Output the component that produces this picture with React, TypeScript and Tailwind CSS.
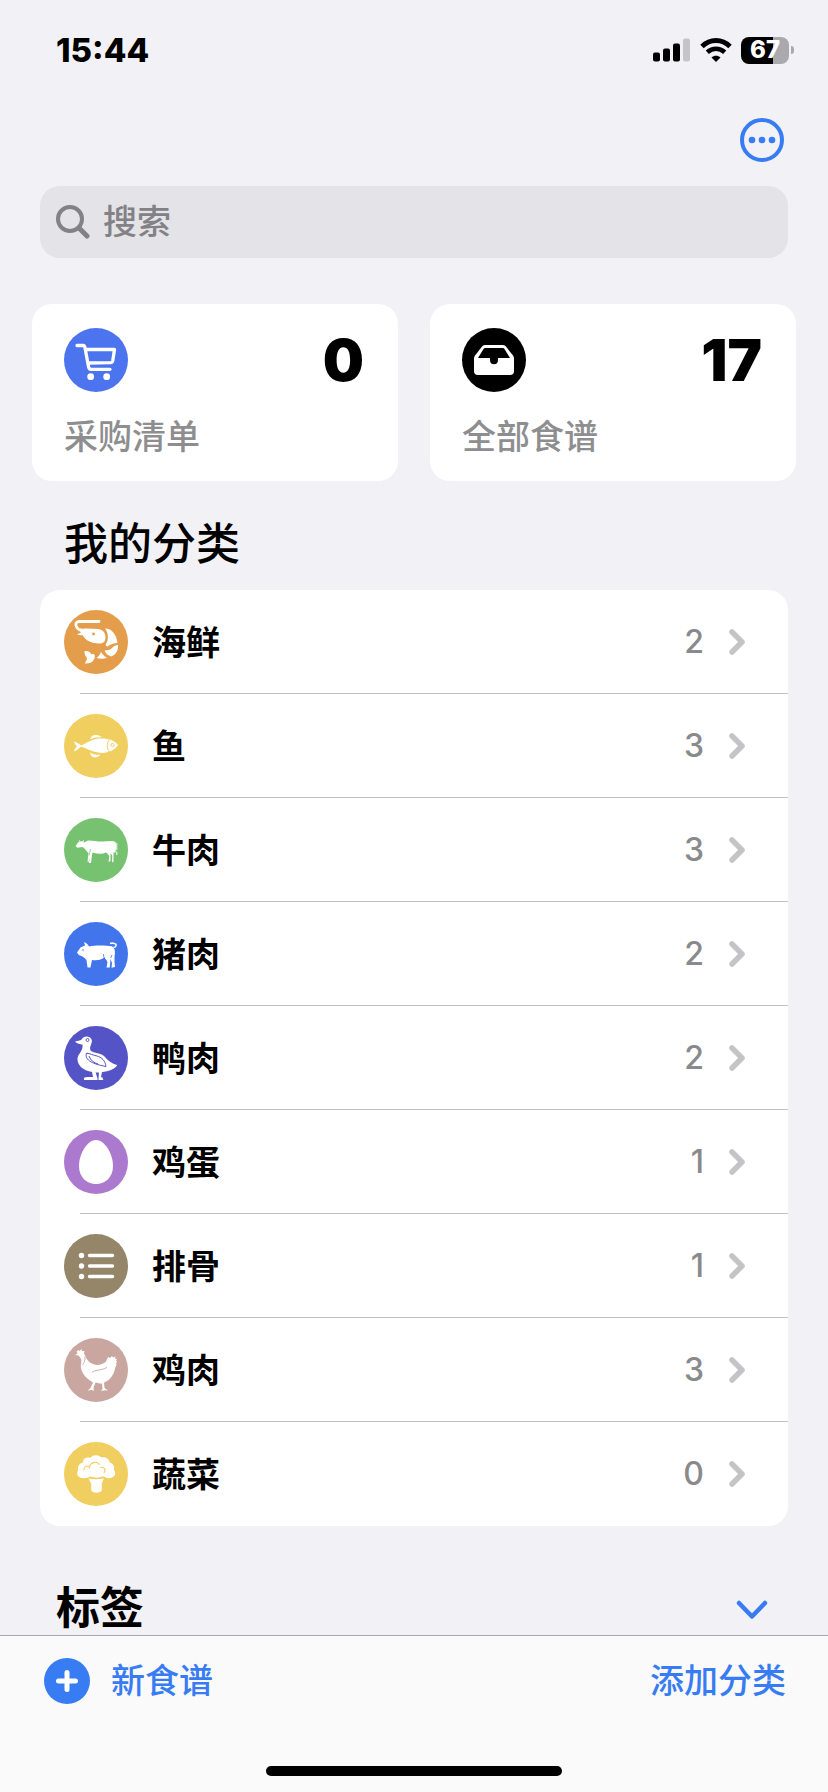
import type { ReactNode } from "react";

/* Glyphs share a 64 x 64 canvas and are drawn in white on the badge colour. */

const ShrimpGlyph = (
  <>
    <path d="M35 11.500H15.500C12.500 11.500 11.500 13 12 15.500C12.500 17.500 14 19.500 17 20" fill="none" stroke="#fff" strokeWidth="2.800" strokeLinecap="round" />
    <path d="M14 19.500C20 18 28 18.500 34 19C39 19.500 41.500 23 41.500 27C41.500 30.500 40 33 37 33.500C32 34 27 32.500 23.500 30.500C20.500 28.500 19.500 26.500 18.500 25C16.500 25.500 14.500 25 13 24.200C15 23.500 16.500 23 17 22C15.500 21.500 14.500 20.500 14 19.500Z" />
    <circle className="fill-current" cx="29.500" cy="24" r="1.400" />
    <path d="M41 18.500C47 18 52.500 24 53.500 33C49.500 33 46.500 34.500 43.500 36.500C41.500 36 41 35 42.500 33C45 29 44 22 41 18.500Z" />
    <path d="M54 35C54.500 40 52 45 47 46.500C44 45.500 41.500 43.500 40.500 40.500C44 40.500 47.500 39.500 49 37C50.500 35.800 52 35.200 54 35Z" />
    <path d="M37 42C38.500 44.500 40.500 46.500 43 47.800C40 49 36 49 32.500 48C34.500 46.500 36 44.500 37 42Z" />
    <path d="M20.500 41C24 40.500 26.500 42 27.500 44.500C29 43.500 30.500 44 30.800 46C31 50 27.500 54 21 53.500C21.500 51.500 23 50 23 48C21.500 46 20.200 44 20.500 41Z" />
  </>
);

const FishGlyph = (
  <>
    <path d="M10 27.500C13 28 15 30 17 31.500C22 29.500 27 25 36 24.500C44 24 51 26.500 54 31C51 36 44 39.500 36 38.800C28 38 22 34 17 32.800C15 34 13 36.500 10 37.500C10.500 35.500 11.500 34 13 32.300C11.500 31 10.500 29.500 10 27.500Z" />
    <path d="M26 25.500C27 23 28.500 21 31 21C34 21 36 21.500 38 23.300C34 22.800 30 23.600 26 25.500Z" />
    <path d="M26 38.500C28 40 32 41 36.500 40.800C34.500 43 32 44 29 43C27 42.500 26.500 40.500 26 38.500Z" />
    <path d="M45.500 25.500C42.500 29 42.500 34.500 45.500 38" fill="none" stroke="currentColor" strokeWidth="1" />
    <circle cx="48.500" cy="31" r="1.600" fill="none" stroke="currentColor" strokeWidth="1" />
  </>
);

const CowGlyph = (
  <>
    <path d="M14.500 24L15.500 24L15 21.500L16.500 23.500H18L20 22L19.500 24.500C21 25 22 23 24 22.500C30 22.500 34 23.800 39 23.500C44 23.200 49 22.500 51.500 24C52.500 28 52 31 51.500 34.500H49.500V43.500L48 44.500L48.300 38L47 35.500L46.500 36V43L44.500 44L45.300 38C44 36 43 35 42 34.500C38 36.500 33 36 28.500 34.500L28 37L27 45L24.800 45L26 39L24.500 44L23.500 43.500L24.500 35C22 33 20.500 29.500 18 29L13.500 29.800L11.500 28L14.500 24Z" />
    <path d="M52.800 25V37" fill="none" stroke="#fff" strokeWidth="1" strokeDasharray="7 1.500" />
    <path d="M25 37.500L26.500 31" fill="none" stroke="currentColor" strokeWidth=".7" />
  </>
);

const PigGlyph = (
  <>
    <path d="M20 20C22 20.500 24 22.500 25 24.500C32 23 42 23.500 48 24.300C51 26 51.500 30 50.500 34.500L50.500 40L51 45L47.500 45.800L48 41L46.500 37L45.800 45.500L42.500 45.500L43.500 40L40.500 35.500C36 38.500 32 38.500 28 38L26.500 45.500H23.500L22.500 38C20.500 35.500 17.500 33.500 14.800 33L13 30.500L16.500 25.500L21 23.500Z" />
    <path d="M49.500 25.500C52.500 25.500 53 22 50.500 21.500C49 21 47.500 21 46 21.500" fill="none" stroke="#fff" strokeWidth="1.500" />
    <circle className="fill-current" cx="19" cy="28" r=".8" />
    <path d="M39.500 32C39.500 35 40.500 37.500 42.500 39M46.800 36L48 33" fill="none" stroke="currentColor" strokeWidth=".8" />
  </>
);

const DuckGlyph = (
  <>
    <path d="M11 15.500C14 14.800 17.500 14.500 18.300 12.500C20 9.500 26.500 9.500 27.800 14C28.500 17.500 25 20.500 26.500 24.500C30 27.500 37 26.500 40.500 30.500C43.500 34 48 38 53.300 39C50 44.500 41 46.500 32 46.500C22 46 14 41 13.500 34C13 28 19.500 25.500 18.500 18.500C16 18 13 18 11 15.500Z" />
    <path d="M28 46L29 51C26 51 21 50.500 20 52V54H33.500V52.500L31.500 46ZM35 46L34.500 52V54H39.300L38.500 51.500L37 51L38 46Z" />
    <circle cx="23.500" cy="14" r="1.500" fill="none" stroke="currentColor" strokeWidth=".9" />
    <path d="M22.500 27C20.500 33 26 37.500 42 40.500C41 34.500 38 31.500 33 30C29 29 26 27.800 22.500 27ZM25 30C26.500 34.500 30 37 34 38" fill="none" stroke="currentColor" strokeWidth="1" />
  </>
);

const EggGlyph = <path d="M32 10C40.500 10 49 23.500 49 36C49 47 41.500 54 32 54C22.500 54 15 47 15 36C15 23.500 23.500 10 32 10Z" />;

const ListGlyph = (
  <>
    <circle cx="17.500" cy="21.500" r="2.700" />
    <circle cx="17.500" cy="32" r="2.700" />
    <circle cx="17.500" cy="42.500" r="2.700" />
    <path d="M25.500 21.500H48.500M25.500 32H48.500M25.500 42.500H48.500" stroke="#fff" strokeWidth="3.400" strokeLinecap="round" />
  </>
);

const ChickenGlyph = (
  <>
    <path d="M12.500 13.500L14.500 12L15.500 13L17.500 11L18 13L20.500 13L20 15.500C22 19.500 24 24.500 29 26C33.500 28 38.500 26.500 42 23.500C43 21.500 43 20.500 44.500 19L46 20L48 18L49 19.500L51.500 18.500L51 20.500L53 21L52 22.500L53.300 24L52 25L52.500 27C50.500 29.500 51.500 33 48 38C45.500 42 42 44 40 44.500L40.500 50L44 52.500L41.500 52.300L37 53L38.500 51L38 45.500C35 45.500 33.500 45 31.500 44.500L29.500 49.500L29.800 53L27.500 51.800L23.500 52.800L26.500 50L29 44.500C23 41 18 36 17 30C16.300 26.500 18.500 22 16.500 20L14.500 17.500L11 17L13.500 15.500Z" />
    <path d="M28 34.500C31 31.500 36 33 43 29.500M21 18.500C21.500 22 20 25 18.500 27" fill="none" stroke="currentColor" strokeWidth=".9" />
  </>
);

const BroccoliGlyph = (
  <>
    <path d="M18 36C13.500 35.500 12 31.500 14 28.500C13.200 24 16 21 19 20.500C18.500 16.500 23.500 14.500 26.500 15.800C28.500 12.500 35 12.500 37 15.500C41 14.500 45.500 16.500 45.500 20.500C49 21 51 24.500 50 28C52.500 31.500 51 35 46.500 36C42.500 36.800 41 34.500 39 34.500C35 36 30 36 26 34.500C23.500 36 21 36.500 18 36Z" />
    <path d="M24.500 36.500C29 37.500 35 37.500 39.800 36.500L37.800 41.500V48C37.500 51.500 27.500 51.500 27.300 48V42Z" />
    <path d="M19.800 28.500C20 24.500 22 23.500 25 24.500M25.500 26.500C25 20.500 33 18 35.500 23M36 25.500C40 24.500 42.500 27.500 40 31" fill="none" stroke="currentColor" strokeWidth="1.100" />
  </>
);

const CartGlyph = (
  <>
    <path d="M13 17.500H19.500C20.300 17.500 20.600 18 20.800 18.800L24.500 38.500C24.800 40.500 25.500 41.300 27 41.300H46M21.500 21.500H50.500L48.800 32.500C48.500 34 47.800 34.600 46.500 34.700L23.800 35" fill="none" stroke="#fff" strokeWidth="3.300" strokeLinecap="round" strokeLinejoin="round" />
    <circle cx="26.700" cy="48.700" r="3.400" />
    <circle cx="42.700" cy="48.700" r="3.400" />
  </>
);

const TrayGlyph = (
  <>
    <path d="M20.500 18Q21.500 17 23.500 17H40.500Q42.500 17 43.500 18L51 27.500Q52 29 52 30.500V43Q52 47 48 47H16Q12 47 12 43V30.500Q12 29 13 27.500Z" />
    <path className="fill-current" d="M23 20H41Q41.800 20 42.300 20.800L48 30H36V32Q36 36.200 32 36.200Q28 36.200 28 32V30H16L21.700 20.800Q22.200 20 23 20Z" />
  </>
);

function Badge({ color, children }: { color: string; children: ReactNode }) {
  return (
    <span className={`flex size-16 shrink-0 rounded-full bg-current ${color}`}>
      <svg viewBox="0 0 64 64" fill="#fff" className="size-16" aria-hidden="true">
        {children}
      </svg>
    </span>
  );
}

const categories = [
  { name: "海鲜", count: 2, color: "text-[#e49d4b]", glyph: ShrimpGlyph },
  { name: "鱼", count: 3, color: "text-[#f0ce60]", glyph: FishGlyph },
  { name: "牛肉", count: 3, color: "text-[#76c270]", glyph: CowGlyph },
  { name: "猪肉", count: 2, color: "text-[#4275ec]", glyph: PigGlyph },
  { name: "鸭肉", count: 2, color: "text-[#5554c6]", glyph: DuckGlyph },
  { name: "鸡蛋", count: 1, color: "text-[#ab7acf]", glyph: EggGlyph },
  { name: "排骨", count: 1, color: "text-[#95866a]", glyph: ListGlyph },
  { name: "鸡肉", count: 3, color: "text-[#c9a7a0]", glyph: ChickenGlyph },
  { name: "蔬菜", count: 0, color: "text-[#f0ce60]", glyph: BroccoliGlyph },
];

function StatusBar() {
  return (
    <header className="flex h-25 items-center justify-between pr-[34px] pl-14">
      <time className="text-[33px] leading-10 font-extrabold text-black">15:44</time>
      <div className="flex items-center gap-[9px]">
        <svg viewBox="0 0 38 24" className="h-6 w-[38px]" aria-label="信号">
          <rect x="0" y="14.500" width="7" height="9" rx="2" />
          <rect x="10" y="10.500" width="7" height="13" rx="2" />
          <rect x="20" y="5.500" width="7" height="18" rx="2" />
          <rect x="30" y=".5" width="7" height="23" rx="2" fill="#c5c5c9" />
        </svg>
        <svg viewBox="0 0 32 24" className="h-6 w-8" aria-label="无线网络">
          <path d="M2 8.500C10 .5 22 .5 30 8.500" fill="none" stroke="#000" strokeWidth="4.800" />
          <path d="M7.300 14.200C12.500 9.500 19.500 9.500 24.700 14.200" fill="none" stroke="#000" strokeWidth="4.600" />
          <path d="M16 24L11.500 19.500C14 17 18 17 20.500 19.500Z" />
        </svg>
        <div className="flex items-center gap-0.5">
          <div className="flex h-[27px] w-12 items-center justify-center rounded-lg bg-linear-to-r from-black from-67% to-[#a9a9ae] to-67% text-2xl leading-6 font-extrabold text-white">
            67
          </div>
          <span className="h-2 w-[3px] rounded-r-full bg-[#a9a9ae]" />
        </div>
      </div>
    </header>
  );
}

function SummaryCard({ label, count, color, glyph }: { label: string; count: number; color: string; glyph: ReactNode }) {
  return (
    <a href="#" className="flex flex-1 flex-col gap-[23px] rounded-[20px] bg-white px-8 pt-6 pb-[22px]">
      <span className="flex items-center justify-between">
        <Badge color={color}>{glyph}</Badge>
        <span className="pr-0.5 text-[58px] leading-16 font-black text-black">{count}</span>
      </span>
      <span className="text-[34px] leading-11 font-medium text-[#8e8e90]">{label}</span>
    </a>
  );
}

export default function App() {
  return (
    <div className="flex min-h-screen flex-col bg-[#f1f1f6] font-['Inter','Noto_Sans_CJK_SC',sans-serif]">
      <StatusBar />

      <main className="flex-1 pt-[18px]">
        <div className="flex justify-end px-11">
          <button type="button" aria-label="更多" className="size-11 text-[#377cf3]">
            <svg viewBox="0 0 44 44" className="size-11">
              <circle cx="22" cy="22" r="20" fill="none" stroke="currentColor" strokeWidth="4" />
              <g fill="currentColor">
                <circle cx="12" cy="22" r="3.300" />
                <circle cx="22" cy="22" r="3.300" />
                <circle cx="32" cy="22" r="3.300" />
              </g>
            </svg>
          </button>
        </div>

        <label className="mx-10 mt-6 flex h-18 items-center gap-[13px] rounded-[20px] bg-[#e4e3e8] px-4">
          <svg viewBox="0 0 34 34" className="size-[34px] shrink-0" fill="none" stroke="#828186" aria-hidden="true">
            <circle cx="14" cy="14" r="12" strokeWidth="4" />
            <path d="M23 23L31 31" strokeWidth="5" strokeLinecap="round" />
          </svg>
          <input
            type="search"
            aria-label="搜索"
            placeholder="搜索"
            className="min-w-0 flex-1 bg-transparent text-[34px] leading-11 font-medium outline-none placeholder:text-[#828186]"
          />
        </label>

        <section className="mx-8 mt-[46px] flex gap-8">
          <SummaryCard label="采购清单" count={0} color="text-[#4b74ee]" glyph={CartGlyph} />
          <SummaryCard label="全部食谱" count={17} color="text-black" glyph={TrayGlyph} />
        </section>

        <section className="mt-[37px]">
          <h2 className="px-16 text-[44px] leading-[52px] font-medium text-black">我的分类</h2>
          <ul className="mx-10 mt-5 overflow-hidden rounded-[20px] bg-white">
            {categories.map((category, index) => (
              <li key={category.name}>
                <a href="#" className="flex h-26 flex-col pl-6">
                  <span className="flex flex-1 items-center pr-[42px]">
                    <Badge color={category.color}>{category.glyph}</Badge>
                    <span className="ml-6 flex-1 pt-0.5 text-[34px] leading-11 font-bold text-black">{category.name}</span>
                    <span className="text-[32px] leading-11 font-medium text-[#8a8a8c]">{category.count}</span>
                    <svg viewBox="0 0 18 28" className="ml-6 h-7 w-[18px]" fill="none" stroke="#c4c4c6" strokeWidth="5.500" strokeLinecap="round" strokeLinejoin="round" aria-hidden="true">
                      <path d="M4 4L14 14L4 24" />
                    </svg>
                  </span>
                  {index < categories.length - 1 && <span className="-mt-px ml-4 h-px bg-[#c3c3c6]" />}
                </a>
              </li>
            ))}
          </ul>
        </section>

        <section className="mt-14 flex items-center justify-between pr-15 pl-14 pb-px">
          <h2 className="text-[44px] leading-[52px] font-bold text-black">标签</h2>
          <button type="button" aria-label="展开标签" className="pt-1 text-[#377cf3]">
            <svg viewBox="0 0 32 20" className="h-5 w-8" fill="none" stroke="currentColor" strokeWidth="4.500" strokeLinecap="round" strokeLinejoin="round">
              <path d="M3 3L16 16.500L29 3" />
            </svg>
          </button>
        </section>
      </main>

      <footer className="sticky bottom-0 border-t border-[#a9a9ad] bg-[#fafafb] pt-[22px] text-[#377cf3]">
        <div className="flex items-center justify-between pr-[42px] pl-11">
          <button type="button" className="flex items-center gap-[21px] text-[34px] leading-[46px] font-medium">
            <svg viewBox="0 0 46 46" className="size-[46px]" aria-hidden="true">
              <circle cx="23" cy="23" r="23" fill="currentColor" />
              <path d="M23 14.500V31.500M14.500 23H31.500" stroke="#fff" strokeWidth="5" strokeLinecap="round" />
            </svg>
            新食谱
          </button>
          <button type="button" className="text-[34px] leading-[46px] font-medium">
            添加分类
          </button>
        </div>
        <div className="mx-auto mt-[62px] mb-4 h-2.5 w-74 rounded-full bg-black" />
      </footer>
    </div>
  );
}
